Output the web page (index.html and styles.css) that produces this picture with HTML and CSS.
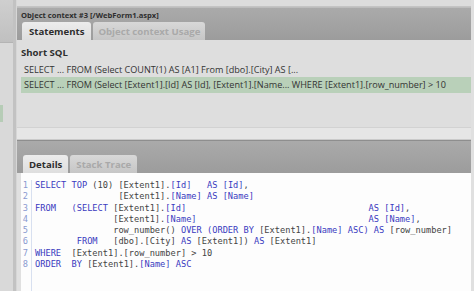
FILE: index.html
```html
<!DOCTYPE html>
<html>
<head>
<meta charset="utf-8">
<link rel="stylesheet" href="styles.css">
</head>
<body>
<div class="sidebar">
  <div class="sb-top"></div>
  <div class="sb-gap"></div>
  <div class="sb-sel"></div>
</div>
<div class="divider"></div>
<div class="main">
  <div class="topband"></div>
  <div class="phead">
    <div class="ptitle">Object context #3 [/WebForm1.aspx]</div>
    <div class="tabs">
      <div class="tab active">Statements</div>
      <div class="tab">Object context Usage</div>
    </div>
  </div>
  <div class="pbody">
    <div class="section">Short SQL</div>
    <div class="row">SELECT ... FROM (Select COUNT(1) AS [A1] From [dbo].[City] AS [...</div>
    <div class="row sel">SELECT ... FROM (Select [Extent1].[Id] AS [Id], [Extent1].[Name... WHERE [Extent1].[row_number] &gt; 10</div>
  </div>
  <div class="splitter"></div>
  <div class="phead phead2">
    <div class="tabs">
      <div class="tab active">Details</div>
      <div class="tab">Stack Trace</div>
    </div>
  </div>
  <div class="editor">
    <div class="gutter"><span>1</span><span>2</span><span>3</span><span>4</span><span>5</span><span>6</span><span>7</span><span>8</span></div>
    <div class="code">
      <div class="ln"><span class="k">SELECT TOP</span> (10) [Extent1].<span class="k">[Id]</span>   <span class="k">AS</span> <span class="k">[Id]</span>,</div>
      <div class="ln">                [Extent1].<span class="k">[Name]</span> <span class="k">AS</span> <span class="k">[Name]</span></div>
      <div class="ln"><span class="k">FROM</span>   <span class="k">(SELECT</span> [Extent1].<span class="k">[Id]</span>                                   <span class="k">AS</span> <span class="k">[Id]</span>,</div>
      <div class="ln">               [Extent1].<span class="k">[Name]</span>                                 <span class="k">AS</span> <span class="k">[Name]</span>,</div>
      <div class="ln">               row_number() <span class="k">OVER</span> <span class="k">(ORDER BY</span> [Extent1].<span class="k">[Name]</span> <span class="k">ASC)</span> <span class="k">AS</span> [row_number]</div>
      <div class="ln">        <span class="k">FROM</span>   [dbo].[City] <span class="k">AS</span> [Extent1]) <span class="k">AS</span> [Extent1]</div>
      <div class="ln"><span class="k">WHERE</span>  [Extent1].[row_number] &gt; 10</div>
      <div class="ln"><span class="k">ORDER</span>  <span class="k">BY</span> [Extent1].<span class="k">[Name]</span> <span class="k">ASC</span></div>
    </div>
  </div>
</div>
</body>
</html>
```
FILE: styles.css
```css
html, body {
  margin: 0;
  padding: 0;
}
body {
  width: 474px;
  height: 291px;
  overflow: hidden;
  display: flex;
  background: #dcdcdc;
  font-family: "Open Sans", "Noto Sans", sans-serif;
  color: #333;
}
.sidebar {
  width: 13px;
  display: flex;
  flex-direction: column;
  background: #d9d9d9;
}
.sb-top {
  height: 42px;
  background: linear-gradient(#cfcfcf, #c0c0c0);
  border-bottom: 1px solid #b4b4b4;
}
.sb-gap {
  height: 62px;
}
.sb-sel {
  width: 3px;
  height: 17px;
  background: #b6ccb6;
}
.divider {
  width: 3px;
  background: #c2c2c2;
  border-right: 1px solid #d6d6d6;
}
.main {
  flex: 1;
  display: flex;
  flex-direction: column;
  padding-right: 3px;
  background: #e0e0e0;
}
.topband {
  height: 6px;
  background: #dcdcdc;
  border-bottom: 1px solid #c4c4c4;
}
.phead {
  height: 32px;
  background: linear-gradient(#aaaaaa, #9c9c9c);
  border-top: 1px solid #bdbdbd;
  display: flex;
  flex-direction: column;
  justify-content: flex-end;
  padding-left: 4px;
}
.ptitle {
  font-size: 7.6px;
  font-weight: bold;
  color: #2e2e2e;
  height: 14px;
  line-height: 14px;
}
.tabs {
  display: flex;
  gap: 2px;
  height: 18px;
}
.tab {
  height: 18px;
  line-height: 19px;
  padding: 0 5px;
  border-radius: 3px 3px 0 0;
  background: linear-gradient(#d8d8d8, #c6c6c6);
  color: #a9a9a9;
  font-size: 9.6px;
  font-weight: bold;
  box-sizing: border-box;
}
.tab.active {
  background: linear-gradient(#ececec, #dedede);
  color: #2e2e2e;
  padding: 0 7px;
}
.tabs .tab:first-child {
  margin-left: 1px;
}
.pbody {
  height: 88px;
  background: #dedede;
  padding: 5px 0 0 4px;
  box-sizing: border-box;
  border-bottom: 1px solid #d2d2d2;
}
.section {
  font-size: 9.6px;
  font-weight: bold;
  color: #2e2e2e;
  height: 17px;
  line-height: 16px;
}
.row {
  font-size: 9.1px;
  height: 15px;
  line-height: 15px;
  padding-left: 3px;
  color: #333;
  white-space: nowrap;
}
.row.sel {
  background: #b9d0b9;
  height: 16px;
  line-height: 16px;
}
.splitter {
  height: 11px;
  background: #e6e6e6;
  border-bottom: 1px solid #cacaca;
}
.phead2 {
  height: 32px;
  border-top: 1px solid #8e8e8e;
  padding-left: 5px;
}
.phead2 .tab {
  padding: 0 6px;
}
.editor {
  flex: 1;
  display: flex;
  margin-left: 4px;
  background: #fdfdfd;
  padding-top: 7px;
}
.gutter {
  display: flex;
  flex-direction: column;
  width: 7px;
  padding-right: 3px;
  border-right: 1px solid #d8e0f0;
  font-family: "DejaVu Sans Mono", monospace;
  font-size: 8.67px;
  line-height: 11.3px;
  color: #8a9ad0;
  text-align: right;
}
.code {
  margin-left: 3px;
  font-family: "DejaVu Sans Mono", monospace;
  font-size: 8.67px;
  line-height: 11.3px;
  color: #444;
}
.ln {
  white-space: pre;
  height: 11.3px;
}
.k {
  color: #3a3abf;
}
```
